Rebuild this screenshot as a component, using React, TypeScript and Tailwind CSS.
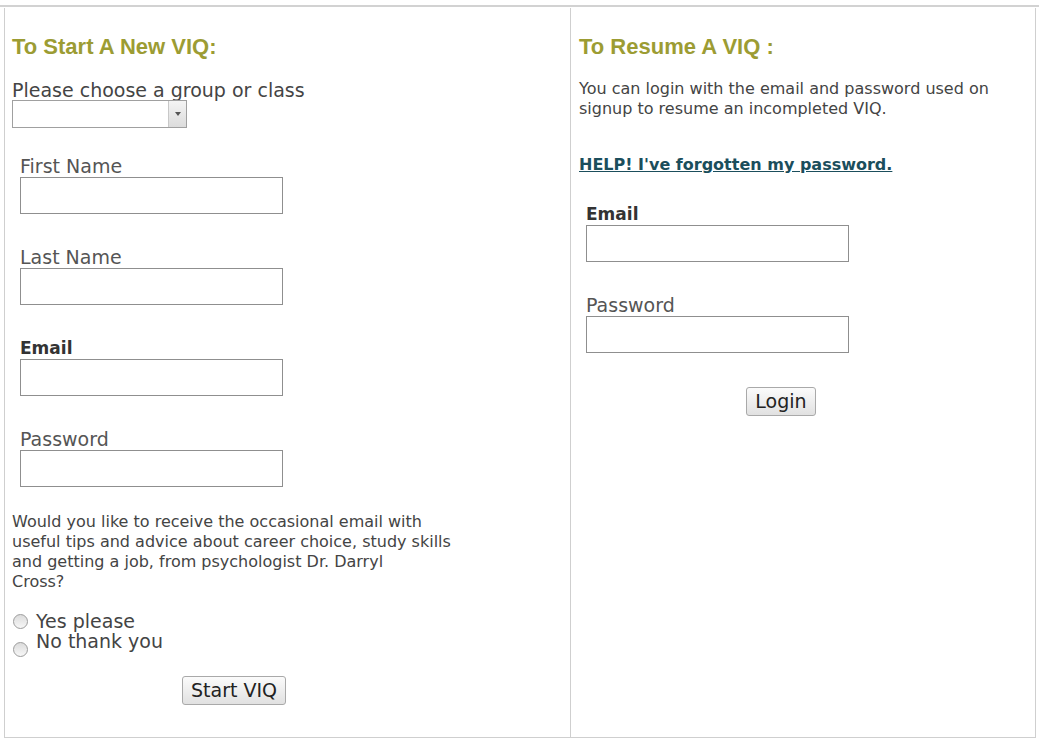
import { useState } from "react";

const FONT = { fontFamily: '"DejaVu Sans", Verdana, sans-serif' };
const HEAD = { fontFamily: '"Liberation Sans", Arial, sans-serif' };

function Field({ label, bold = false }: { label: string; bold?: boolean }) {
  return (
    <div className="flex flex-col">
      <label
        className={
          bold
            ? "text-[17px] leading-[22px] font-bold text-[#333]"
            : "text-[19px] leading-[22px] text-[#555]"
        }
      >
        {label}
      </label>
      <input
        type="text"
        className="w-[263px] h-[37px] border border-[#8f8f8f] bg-white outline-none"
      />
    </div>
  );
}

function Btn({ children }: { children: React.ReactNode }) {
  return (
    <button className="px-[8px] h-[29px] text-[19px] leading-none text-[#222] border border-[#a9a9a9] rounded-[3px] bg-gradient-to-b from-[#fbfbfb] to-[#e1e1e1]">
      {children}
    </button>
  );
}

function Radio({
  checked,
  onChange,
  low = false,
}: {
  checked: boolean;
  onChange: () => void;
  low?: boolean;
}) {
  return (
    <input
      type="radio"
      name="optin"
      checked={checked}
      onChange={onChange}
      className={
        "appearance-none w-[15px] h-[15px] m-0 ml-[1px] rounded-full border border-[#9c9c9c] bg-gradient-to-b from-[#dcdcdc] to-[#f7f7f7] checked:from-[#6a6a6a] checked:to-[#9a9a9a] " +
        (low ? "mb-[-6px]" : "")
      }
    />
  );
}

export default function App() {
  const [optIn, setOptIn] = useState<string | null>(null);

  return (
    <div className="w-[1039px] h-[743px] bg-white" style={FONT}>
      <div className="pt-[5px]">
        <div className="border-t-2 border-[#d2d2d2]" />
        <div className="ml-[4px] mt-[1px] w-[1032px] h-[730px] grid grid-cols-[566px_465px] border-l border-b border-[#cfcfcf]">
          {/* left: new VIQ */}
          <div className="border-r border-[#cfcfcf] pl-[7px] pt-[26px]">
            <h2 className="text-[22px] leading-[26px] font-bold text-[#9c9c33]" style={HEAD}>
              To Start A New VIQ:
            </h2>
            <div className="mt-[20px] text-[19px] leading-[20px] text-[#444]">
              Please choose a group or class
            </div>
            <div className="relative w-[175px] h-[28px] border border-[#a0a0a0] bg-white">
              <div className="absolute right-0 top-0 bottom-0 w-[18px] border-l border-[#c8c8c8] bg-gradient-to-b from-[#f4f4f4] to-[#dcdcdc] flex items-center justify-center">
                <div className="w-0 h-0 border-l-[3px] border-r-[3px] border-t-[4px] border-l-transparent border-r-transparent border-t-[#555]" />
              </div>
            </div>

            <div className="pl-[8px] mt-[27px] flex flex-col gap-[32px]">
              <Field label="First Name" />
              <Field label="Last Name" />
              <Field label="Email" bold />
              <Field label="Password" />
            </div>

            <p className="mt-[25px] w-[452px] text-[16px] leading-[20px] text-[#444]">
              Would you like to receive the occasional email with
              <br />
              useful tips and advice about career choice, study skills
              <br />
              and getting a job, from psychologist Dr. Darryl
              <br />
              Cross?
            </p>

            <div className="mt-[19px] text-[19px] leading-[20px] text-[#444]">
              <label className="flex items-center gap-[8px]">
                <Radio checked={optIn === "yes"} onChange={() => setOptIn("yes")} />
                Yes please
              </label>
              <label className="flex items-end gap-[8px]">
                <Radio checked={optIn === "no"} onChange={() => setOptIn("no")} low />
                No thank you
              </label>
            </div>

            <div className="mt-[25px] w-[444px] flex justify-center">
              <Btn>Start VIQ</Btn>
            </div>
          </div>

          {/* right: resume VIQ */}
          <div className="border-r border-[#cfcfcf] pl-[8px] pt-[26px]">
            <h2 className="text-[22px] leading-[26px] font-bold text-[#9c9c33]" style={HEAD}>
              To Resume A VIQ :
            </h2>
            <p className="mt-[19px] w-[440px] text-[16px] leading-[20px] text-[#444]">
              You can login with the email and password used on signup to resume
              an incompleted VIQ.
            </p>
            <a
              href="#"
              className="block mt-[36px] text-[16px] leading-[20px] font-bold text-[#1b4e5c] underline"
            >
              HELP! I've forgotten my password.
            </a>
            <div className="pl-[7px] mt-[28px] flex flex-col gap-[32px]">
              <Field label="Email" bold />
              <Field label="Password" />
            </div>
            <div className="mt-[34px] w-[404px] flex justify-center">
              <Btn>Login</Btn>
            </div>
          </div>
        </div>
      </div>
    </div>
  );
}
